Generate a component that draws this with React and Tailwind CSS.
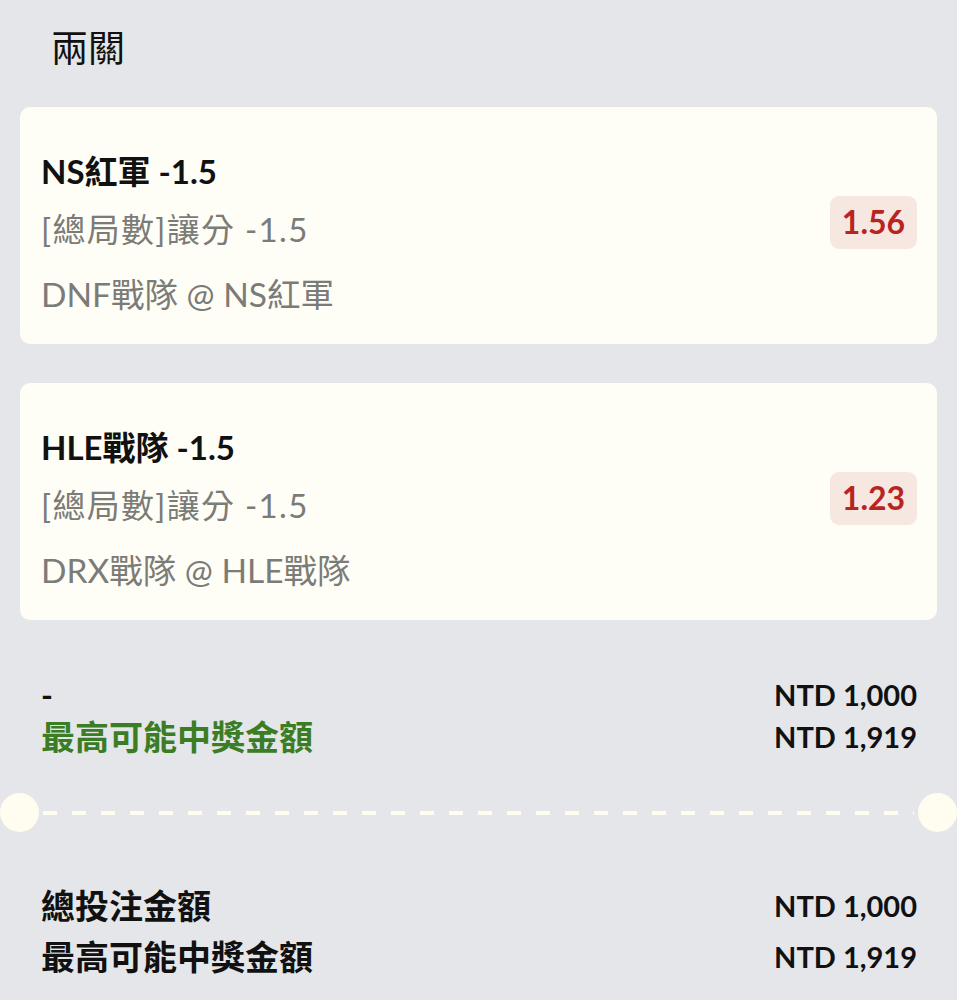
import React from 'react';

const legs = [
  { pick: 'NS紅軍 -1.5', market: '[總局數]讓分 -1.5', match: 'DNF戰隊 @ NS紅軍', odds: '1.56' },
  { pick: 'HLE戰隊 -1.5', market: '[總局數]讓分 -1.5', match: 'DRX戰隊 @ HLE戰隊', odds: '1.23' },
];

function LegCard({ leg }) {
  return (
    <div className="flex items-center justify-between rounded-[10px] bg-[#fffef6] pl-[21px] pr-[20px] pt-[36px] pb-[21px]">
      <div className="flex flex-col">
        <div className="h-[58px] flex items-center text-[33px] font-bold text-[#111]">{leg.pick}</div>
        <div className="h-[58px] flex items-center text-[33px] text-[#7b7b78] tracking-[1.3px]">{leg.market}</div>
        <div className="mt-[6px] h-[58px] flex items-center text-[33.5px] text-[#7b7b78]">{leg.match}</div>
      </div>
      <div className="mt-[-22px] flex h-[53px] w-[87px] items-center justify-center rounded-[9px] bg-[#f7e7e1] text-[32px] font-bold text-[#b82520]">
        {leg.odds}
      </div>
    </div>
  );
}

function Row({ left, right, leftClass }) {
  return (
    <div className="flex items-center justify-between">
      <span className={leftClass}>{left}</span>
      <span className="text-[29px] font-bold text-[#111]">{right}</span>
    </div>
  );
}

export default function App() {
  return (
    <div className="min-h-[1000px] w-[957px] bg-[#e5e6e9] font-['Lato','Noto_Sans_CJK_TC',sans-serif]">
      {/* 標題 */}
      <div className="flex h-[107px] items-start pl-[51px] pt-[22px] text-[37px] font-normal text-[#111] leading-[52px]">兩關</div>

      <div className="flex flex-col gap-[39px] px-[20px]">
        {legs.map((leg) => (
          <LegCard key={leg.pick} leg={leg} />
        ))}
      </div>

      {/* 小計 */}
      <div className="mt-[51px] flex flex-col pl-[41px] pr-[40px]">
        <div className="h-[40px]">
          <Row left="-" right="NTD 1,000" leftClass="text-[32px] font-bold text-[#111]" />
        </div>
        <div className="h-[40px]">
          <Row left="最高可能中獎金額" right="NTD 1,919" leftClass="text-[34px] font-bold text-[#3b7d25]" />
        </div>
      </div>

      {/* 分隔線 */}
      <div className="mt-[42px] flex items-center">
        <div className="h-[39px] w-[39px] shrink-0 rounded-full bg-[#fffdf0]" />
        <div className="mx-[4px] h-[4px] flex-1 bg-[repeating-linear-gradient(90deg,#fffdf0_0_14px,transparent_14px_29px)]" />
        <div className="h-[39px] w-[39px] shrink-0 rounded-full bg-[#fffdf0]" />
      </div>

      {/* 總計 */}
      <div className="mt-[48px] flex flex-col pl-[41px] pr-[40px]">
        <div className="h-[51px]">
          <Row left="總投注金額" right="NTD 1,000" leftClass="text-[34px] font-bold text-[#111]" />
        </div>
        <div className="h-[51px]">
          <Row left="最高可能中獎金額" right="NTD 1,919" leftClass="text-[34px] font-bold text-[#111]" />
        </div>
      </div>
    </div>
  );
}
